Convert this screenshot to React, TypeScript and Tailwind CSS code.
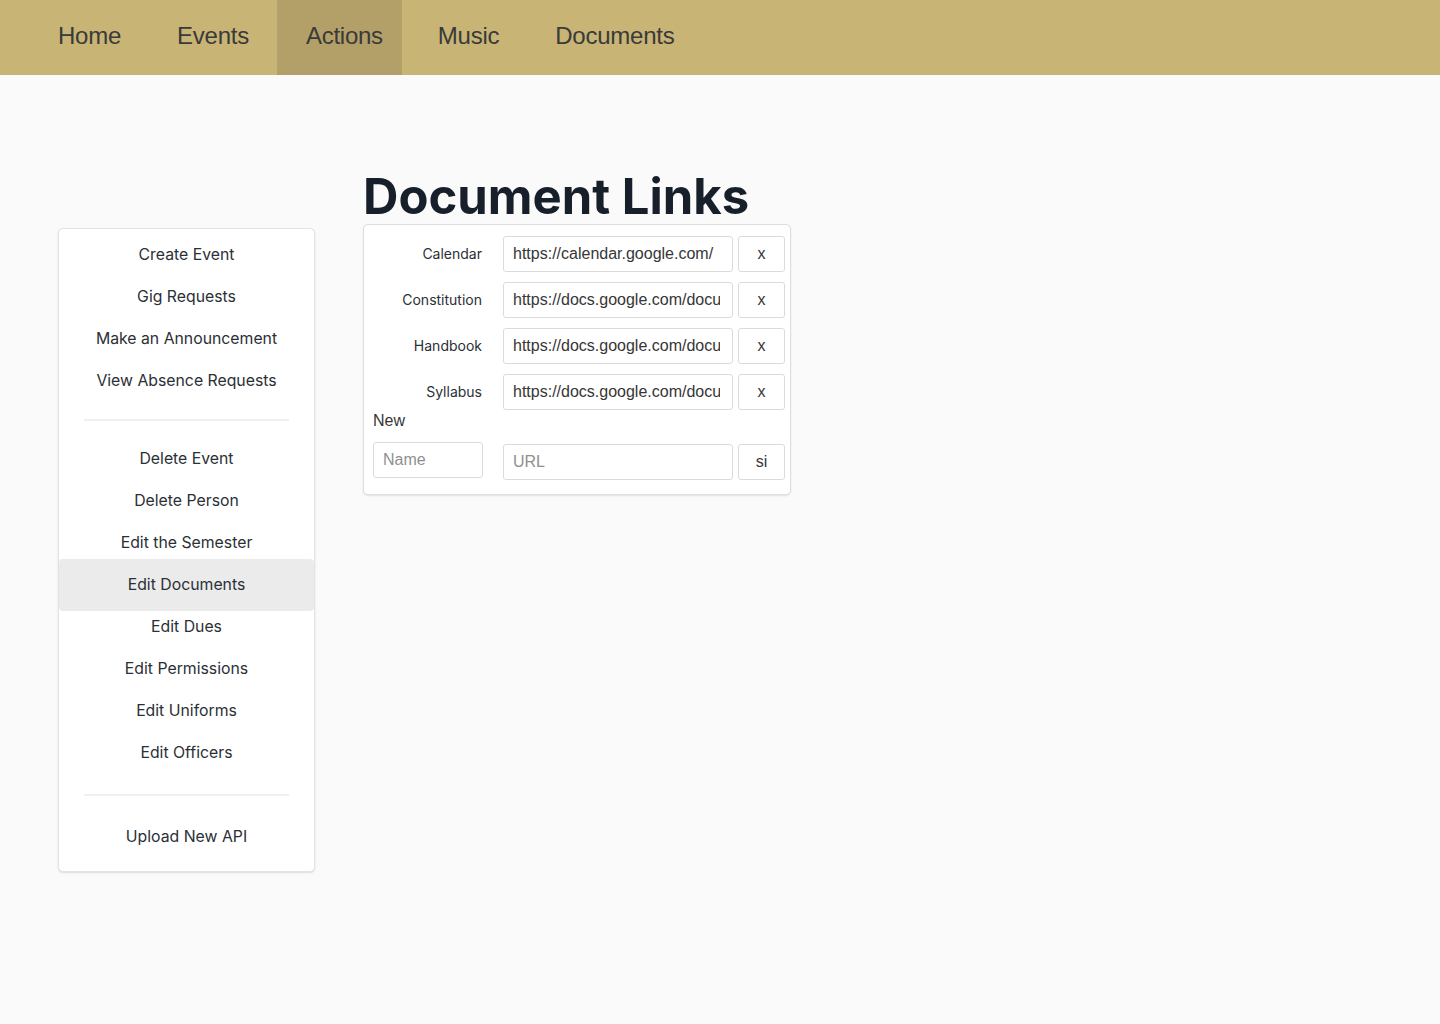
import React from "react";

const links = [
  { name: "Calendar", url: "https://calendar.google.com/" },
  { name: "Constitution", url: "https://docs.google.com/document/d/1" },
  { name: "Handbook", url: "https://docs.google.com/document/d/2" },
  { name: "Syllabus", url: "https://docs.google.com/document/d/3" },
];

function MenuItem({ label, active }: { label: string; active?: boolean }) {
  if (active) {
    return (
      <div className="-my-[5px] h-[52px] flex items-center justify-center rounded-[4px] bg-[#ebebeb] text-[#2b2f36] relative z-10">
        {label}
      </div>
    );
  }
  return (
    <div className="h-[42px] flex items-center justify-center text-[#2b2f36]">
      {label}
    </div>
  );
}

export default function App() {
  return (
    <div className="min-h-screen bg-[#fafafa]">
      {/* Top nav */}
      <nav className="h-[75px] bg-[#c8b475] flex pl-[30px] pb-[3px] font-['Liberation_Sans',Arial,sans-serif] text-[24px] tracking-[-0.25px] text-[#3a3a3a]">
        <div className="px-[28px] flex items-center">Home</div>
        <div className="px-[28px] flex items-center">Events</div>
        <div className="pl-[29px] pr-[19px] -mb-[3px] pb-[3px] flex items-center bg-[#b39f68]">
          Actions
        </div>
        <div className="pl-[36px] pr-[28px] flex items-center">Music</div>
        <div className="px-[28px] flex items-center">Documents</div>
      </nav>

      <div className="flex items-start pl-[58px] pt-[94px] gap-[48px]">
        {/* Sidebar */}
        <aside className="mt-[59px] w-[257px] bg-white border border-[#e3e3e3] rounded-[5px] shadow-[0_1px_2px_rgba(0,0,0,0.12)] pt-[5px] pb-[13px] font-['Inter',sans-serif] text-[15.8px]">
          <MenuItem label="Create Event" />
          <MenuItem label="Gig Requests" />
          <MenuItem label="Make an Announcement" />
          <MenuItem label="View Absence Requests" />
          <div className="mx-[25px] mt-[17px] mb-[17px] h-[2px] bg-[#f0f0f0]" />
          <MenuItem label="Delete Event" />
          <MenuItem label="Delete Person" />
          <MenuItem label="Edit the Semester" />
          <MenuItem label="Edit Documents" active />
          <MenuItem label="Edit Dues" />
          <MenuItem label="Edit Permissions" />
          <MenuItem label="Edit Uniforms" />
          <MenuItem label="Edit Officers" />
          <div className="mx-[25px] mt-[20px] mb-[20px] h-[2px] bg-[#f0f0f0]" />
          <MenuItem label="Upload New API" />
        </aside>

        {/* Main */}
        <main>
          <h1 className="font-['Inter',sans-serif] font-bold text-[49px] leading-[55px] text-[#17202a]">
            Document Links
          </h1>
          <div className="w-[428px] bg-white border border-[#dedede] rounded-[5px] shadow-[0_1px_2px_rgba(0,0,0,0.1)] pl-[9px] pr-[5px] pt-[11px] pb-[14px]">
            <div className="flex flex-col gap-[10px]">
              {links.map((l) => (
                <div key={l.name} className="flex items-center">
                  <label className="w-[109px] -mt-[2px] text-right font-['Inter',sans-serif] text-[14px] text-[#2b2f36]">
                    {l.name}
                  </label>
                  <input
                    readOnly
                    value={l.url}
                    className="ml-[21px] w-[230px] h-[36px] border border-[#dbdbdb] rounded-[3px] bg-white pl-[9px] pr-[12px] font-['Liberation_Sans',Arial,sans-serif] text-[16px] text-[#363636] outline-none"
                  />
                  <button className="ml-[5px] w-[47px] h-[36px] border border-[#dbdbdb] rounded-[3px] bg-white font-['Liberation_Sans',Arial,sans-serif] text-[16px] text-[#363636]">
                    x
                  </button>
                </div>
              ))}
            </div>
            <div className="-mt-[1px] font-['Liberation_Sans',Arial,sans-serif] text-[16px] text-[#363636] leading-[24px]">
              New
            </div>
            <div className="mt-[9px] flex items-start">
              <input
                placeholder="Name"
                className="w-[110px] h-[36px] border border-[#dbdbdb] rounded-[3px] bg-white px-[9px] font-['Liberation_Sans',Arial,sans-serif] text-[16px] text-[#363636] placeholder:text-[#8f8f8f] outline-none"
              />
              <input
                placeholder="URL"
                className="mt-[2px] ml-[20px] w-[230px] h-[36px] border border-[#dbdbdb] rounded-[3px] bg-white px-[9px] font-['Liberation_Sans',Arial,sans-serif] text-[16px] text-[#363636] placeholder:text-[#8f8f8f] outline-none"
              />
              <button className="mt-[2px] ml-[5px] w-[47px] h-[36px] border border-[#dbdbdb] rounded-[3px] bg-white font-['Liberation_Sans',Arial,sans-serif] text-[16px] text-[#363636]">
                si
              </button>
            </div>
          </div>
        </main>
      </div>
    </div>
  );
}
